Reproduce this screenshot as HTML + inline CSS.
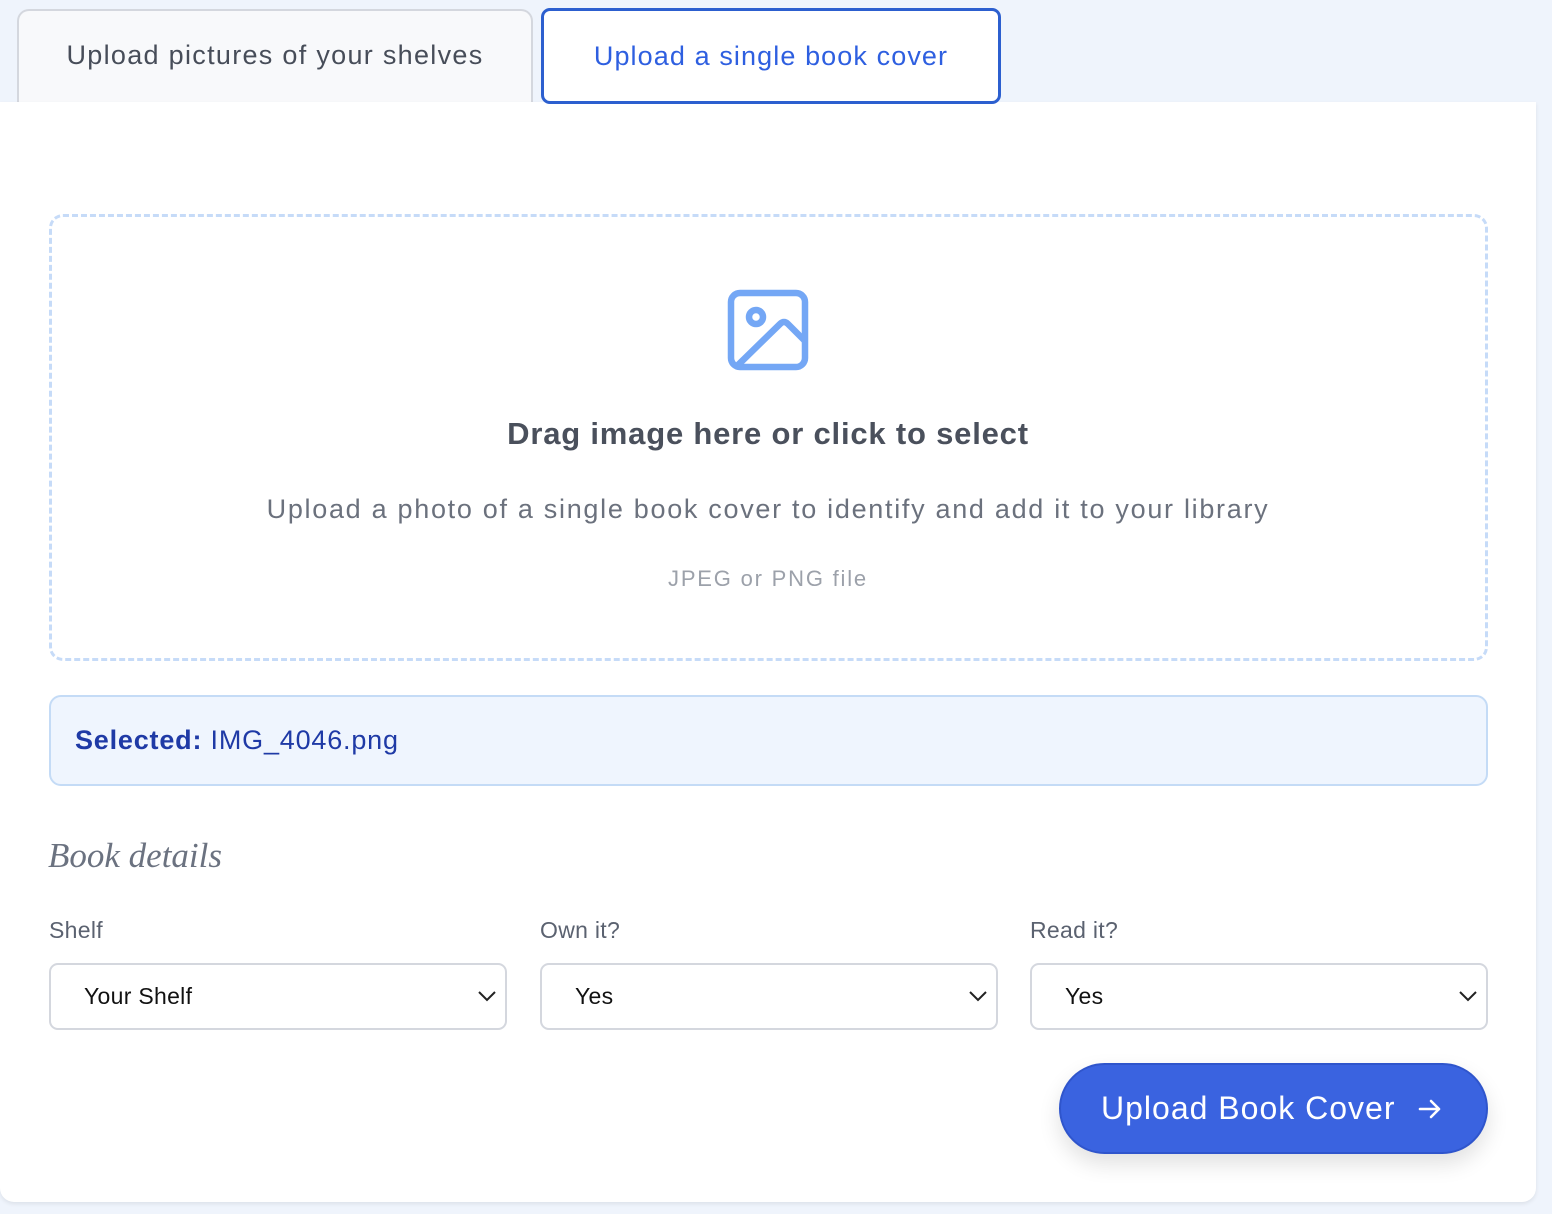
<!DOCTYPE html>
<html><head><meta charset="utf-8"><style>
*{box-sizing:border-box;margin:0;padding:0}
html,body{width:1552px;height:1214px;background:#eff4fc;font-family:"Liberation Sans",sans-serif;overflow:hidden;position:relative}
.abs{position:absolute}
.tab1{left:17px;top:9px;width:516px;height:94px;background:#f8f9fb;border:2px solid #d4d7de;border-bottom:none;border-radius:12px 12px 0 0;color:#474d59;font-size:27px;letter-spacing:1.3px;display:flex;align-items:center;justify-content:center;padding-bottom:4px}
.card{left:0;top:102px;width:1536px;height:1100px;background:#fff;border-radius:0 0 14px 14px;box-shadow:0 2px 4px rgba(0,0,0,.08)}
.tab2{left:541px;top:8px;width:460px;height:96px;background:#fff;border:3px solid #2c5fcf;border-radius:9px;color:#2e5fe0;font-size:27px;letter-spacing:1.1px;display:flex;align-items:center;justify-content:center;z-index:2}
.drop{left:49px;top:214px;width:1439px;height:447px;border:3px dashed #c6dbf8;border-radius:14px}
.c{left:0;width:1536px;text-align:center}
.sel{left:49px;top:695px;width:1439px;height:91px;background:#eff5fe;border:2px solid #c4dbf6;border-radius:12px;color:#1f3aa6;font-size:27px;letter-spacing:0.8px;padding-left:24px;display:flex;align-items:center}
.lbl{top:917px;font-size:23px;color:#5b6270;letter-spacing:0.3px}
.sb{top:963px;width:458px;height:67px;border:2px solid #d4d7de;border-radius:9px;font-size:23px;letter-spacing:0.3px;color:#111;padding-left:33px;display:flex;align-items:center}
.sb svg{position:absolute;right:8px;top:24px}
.btn{left:1059px;top:1063px;width:429px;height:91px;background:#3a63e0;border:2px solid #2f55cc;border-radius:46px;color:#fff;font-size:32px;letter-spacing:1px;display:flex;align-items:center;padding-left:40px;box-shadow:0 10px 22px rgba(0,0,0,.12)}
</style></head><body>
<div class="abs tab1">Upload pictures of your shelves</div>
<div class="abs card"></div>
<div class="abs tab2">Upload a single book cover</div>
<div class="abs drop"></div>
<svg class="abs" style="left:727px;top:289px" width="82" height="82" viewBox="0 0 82 82" fill="none" stroke="#74a7f5" stroke-width="6.5" stroke-linecap="round" stroke-linejoin="round">
<rect x="4" y="4" width="74" height="74" rx="9"/>
<circle cx="29" cy="28" r="7"/>
<path d="M10 77 L53 35 Q57 31 61 35 L77 51"/>
</svg>
<div class="abs c" style="top:416px;font-size:31px;font-weight:bold;color:#4a505c;letter-spacing:0.8px">Drag image here or click to select</div>
<div class="abs c" style="top:494px;font-size:27px;color:#6b717d;letter-spacing:1.7px">Upload a photo of a single book cover to identify and add it to your library</div>
<div class="abs c" style="top:566px;font-size:22px;color:#9ca1aa;letter-spacing:1.8px">JPEG or PNG file</div>
<div class="abs sel"><b>Selected:</b>&nbsp;IMG_4046.png</div>
<div class="abs" style="left:48px;top:836px;font-family:'Liberation Serif',serif;font-style:italic;font-size:35px;color:#6b7280">Book details</div>
<div class="abs lbl" style="left:49px">Shelf</div>
<div class="abs lbl" style="left:540px">Own it?</div>
<div class="abs lbl" style="left:1030px">Read it?</div>
<div class="abs sb" style="left:49px">Your Shelf<svg width="20" height="14" viewBox="0 0 20 14"><path d="M2 3 L10 11 L18 3" fill="none" stroke="#222" stroke-width="2"/></svg></div>
<div class="abs sb" style="left:540px">Yes<svg width="20" height="14" viewBox="0 0 20 14"><path d="M2 3 L10 11 L18 3" fill="none" stroke="#222" stroke-width="2"/></svg></div>
<div class="abs sb" style="left:1030px">Yes<svg width="20" height="14" viewBox="0 0 20 14"><path d="M2 3 L10 11 L18 3" fill="none" stroke="#222" stroke-width="2"/></svg></div>
<div class="abs btn">Upload Book Cover<svg style="margin-left:22px" width="26" height="26" viewBox="0 0 26 26" fill="none" stroke="#fff" stroke-width="2.6" stroke-linecap="round" stroke-linejoin="round"><path d="M3 13 H22 M14 5 L22 13 L14 21"/></svg></div>
</body></html>
